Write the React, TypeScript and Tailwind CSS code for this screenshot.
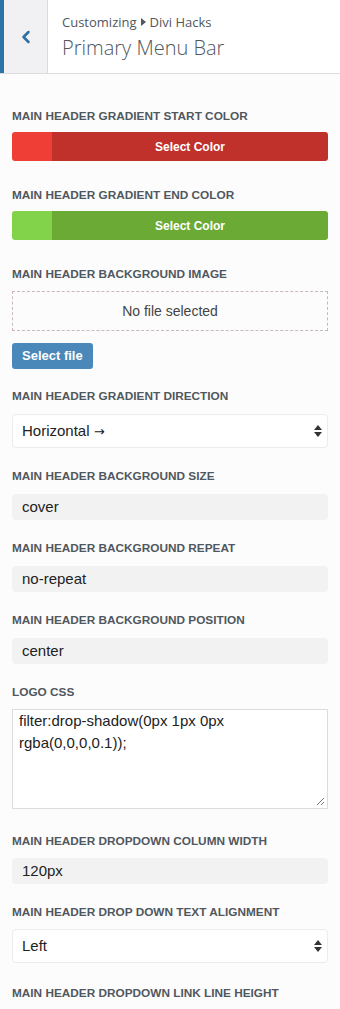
import { ChevronLeft } from "lucide-react";

const label = "block text-[11.8px] font-bold uppercase text-[#50575e] leading-[12px]";
const field = "font-['Liberation_Sans',Arial,sans-serif]";

function Label({ children }: { children: React.ReactNode }) {
  return <span className={label}>{children}</span>;
}

function ColorButton({ swatch, bar }: { swatch: string; bar: string }) {
  return (
    <div className="flex h-[29px] rounded-[3px] overflow-hidden mt-[10px]">
      <div className={`w-[40px] ${swatch}`} />
      <div className={`flex-1 flex items-center justify-center text-white text-[12px] font-bold ${bar}`}>
        Select Color
      </div>
    </div>
  );
}

function TextInput({ value }: { value: string }) {
  return (
    <div className="mt-[12px] h-[26px] rounded-[4px] bg-[#f2f2f2] flex items-center px-[10px] text-[15px] text-[#222]">
      {value}
    </div>
  );
}

function SelectBox({ children, mt }: { children: React.ReactNode; mt: string }) {
  return (
    <div className={`${mt} h-[34px] rounded-[4px] bg-white border border-[#ececec] flex items-center justify-between pl-[9px] pr-[4px] text-[15px] text-[#222]`}>
      <span>{children}</span>
      <svg width="10" height="14" viewBox="0 0 10 14">
        <path d="M5 1 L9 6 H1 Z" fill="#333" />
        <path d="M5 13 L9 8 H1 Z" fill="#333" />
      </svg>
    </div>
  );
}

export default function App() {
  return (
    <div className={`w-[340px] min-h-[1009px] bg-[#fcfcfc] ${field}`}>
      {/* Header */}
      <div className="flex h-[74px] bg-white border-b border-[#dcdcde]">
        <div className="w-[4px] bg-[#2d73a8]" />
        <div className="w-[44px] bg-[#f1f1f3] border-r border-[#dcdcde] flex items-center justify-center text-[#2d6fa3]">
          <ChevronLeft size={20} strokeWidth={3} />
        </div>
        <div className="pl-[14px] pt-[14px] font-['Open_Sans',sans-serif] text-[#50575e]">
          <div className="text-[13px] leading-[16px] flex items-center gap-[4px]">
            Customizing
            <svg width="5" height="8" viewBox="0 0 5 8">
              <path d="M0 0 L5 4 L0 8 Z" fill="#50575e" />
            </svg>
            Divi Hacks
          </div>
          <div className="text-[20px] font-light leading-[28px] mt-[4px] text-[#50575e]">Primary Menu Bar</div>
        </div>
      </div>

      <div className="px-[12px] pt-[36px] pb-[20px]">
        <Label>Main Header Gradient Start Color</Label>
        <ColorButton swatch="bg-[#ef3e36]" bar="bg-[#c0312b]" />

        <div className="mt-[28px]">
          <Label>Main Header Gradient End Color</Label>
          <ColorButton swatch="bg-[#82d34a]" bar="bg-[#6aaa35]" />
        </div>

        <div className="mt-[28px]">
          <Label>Main Header Background Image</Label>
          <div className="mt-[11px] h-[40px] border border-dashed border-[#c8b8b8] flex items-center justify-center text-[14px] text-[#444]">
            No file selected
          </div>
          <div className="mt-[12px] inline-flex h-[26px] px-[10px] items-center rounded-[3px] bg-[#4a88ba] text-white text-[13px] font-bold">
            Select file
          </div>
        </div>

        <div className="mt-[21px]">
          <Label>Main Header Gradient Direction</Label>
          <SelectBox mt="mt-[12px]">
            Horizontal <span className="font-['DejaVu_Sans',sans-serif] text-[13px] text-[#222]">→</span>
          </SelectBox>
        </div>

        <div className="mt-[22px]">
          <Label>Main Header Background Size</Label>
          <TextInput value="cover" />
        </div>

        <div className="mt-[22px]">
          <Label>Main Header Background Repeat</Label>
          <TextInput value="no-repeat" />
        </div>

        <div className="mt-[22px]">
          <Label>Main Header Background Position</Label>
          <TextInput value="center" />
        </div>

        <div className="mt-[22px]">
          <Label>Logo CSS</Label>
          <div className="relative mt-[11px] h-[100px] bg-white border border-[#dcdcdc] px-[6px] pt-0 text-[15px] leading-[22px] text-[#222]">
            filter:drop-shadow(0px 1px 0px rgba(0,0,0,0.1));
            <svg className="absolute right-[2px] bottom-[2px]" width="9" height="9" viewBox="0 0 9 9">
              <path d="M8 1 L1 8 M8 5 L5 8" stroke="#777" strokeWidth="1" />
            </svg>
          </div>
        </div>

        <div className="mt-[26px]">
          <Label>Main Header Dropdown Column Width</Label>
          <div className="mt-[-1px]">
            <TextInput value="120px" />
          </div>
        </div>

        <div className="mt-[22px]">
          <Label>Main Header Drop Down Text Alignment</Label>
          <SelectBox mt="mt-[11px]">Left</SelectBox>
        </div>

        <div className="mt-[24px]">
          <Label>Main Header Dropdown Link Line Height</Label>
        </div>
      </div>
    </div>
  );
}
